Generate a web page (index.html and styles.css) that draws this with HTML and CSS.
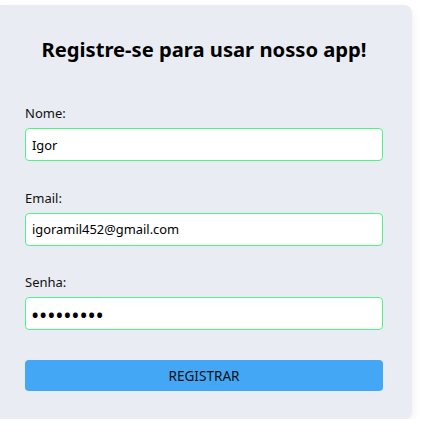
FILE: index.html
```html
<!DOCTYPE html>
<html lang="pt-BR">
<head>
<meta charset="utf-8">
<title>Registro</title>
<link rel="stylesheet" href="styles.css">
</head>
<body>
<main class="card">
  <h2 class="title">Registre-se para usar nosso app!</h2>
  <form class="form">
    <div class="field">
      <label class="label" for="nome">Nome:</label>
      <input class="input" id="nome" type="text" value="Igor">
    </div>
    <div class="field">
      <label class="label" for="email">Email:</label>
      <input class="input" id="email" type="email" value="igoramil452@gmail.com">
    </div>
    <div class="field">
      <label class="label" for="senha">Senha:</label>
      <input class="input input-pass" id="senha" type="password" value="123456789">
    </div>
    <button class="button" type="button">REGISTRAR</button>
  </form>
</main>
</body>
</html>
```
FILE: styles.css
```css
* { box-sizing: border-box; }
html, body { margin: 0; padding: 0; background: #ffffff; }
body {
  font-family: "Noto Sans", "Open Sans", sans-serif;
  color: #111;
  padding-top: 5px;
}
.card {
  width: 412px;
  background: #e9ecf2;
  border-radius: 0 8px 8px 0;
  box-shadow: 0 4px 10px rgba(0, 0, 0, 0.08);
  padding: 32px 29px 28px 25px;
}
.title {
  margin: 0;
  font-size: 20.2px;
  line-height: 24px;
  font-weight: 700;
  text-align: center;
  color: #000;
}
.form {
  display: flex;
  flex-direction: column;
  margin-top: 43px;
}
.field {
  display: flex;
  flex-direction: column;
  gap: 6px;
  margin-bottom: 27.5px;
}
.label {
  font-size: 13px;
  line-height: 18px;
  color: #111;
}
.input {
  height: 33px;
  width: 100%;
  border: 1px solid #4cf57f;
  border-radius: 4px;
  background: #fff;
  padding: 0 6px;
  font-family: "Noto Sans", sans-serif;
  font-size: 12.9px;
  color: #000;
  outline: none;
}
.input-pass {
  font-size: 22px;
  letter-spacing: -0.2px;
  padding-left: 5px;
}
.button {
  margin-top: 2.5px;
  height: 31px;
  width: 100%;
  border: none;
  border-radius: 4px;
  background: #44a7f6;
  color: #111;
  font-family: "Noto Sans", sans-serif;
  font-size: 13.6px;
}
```
